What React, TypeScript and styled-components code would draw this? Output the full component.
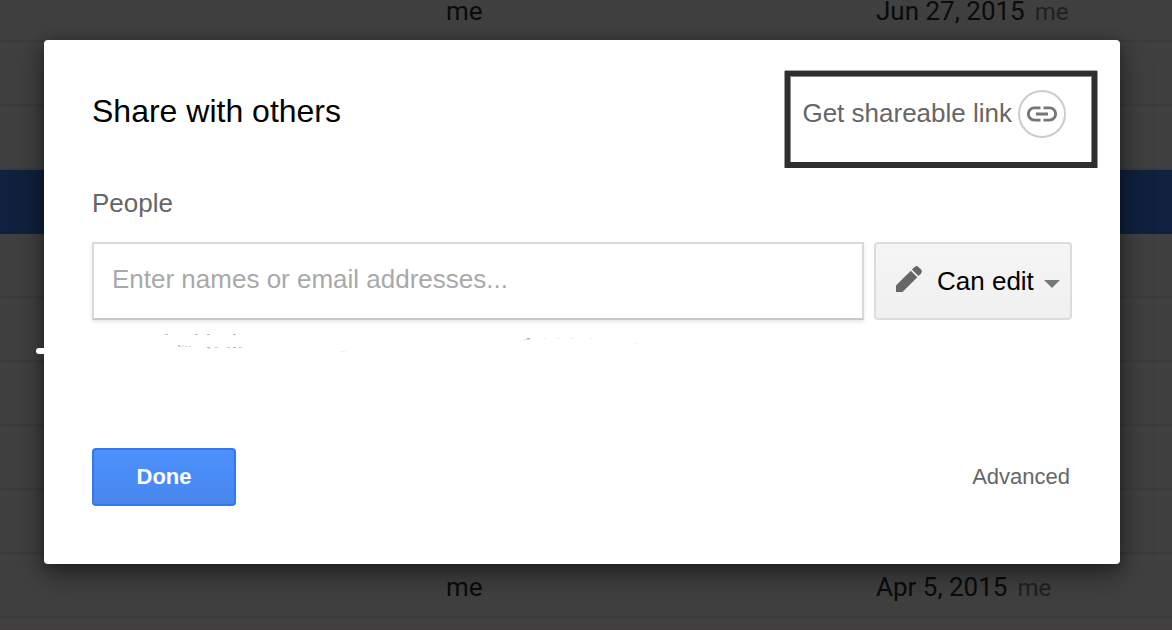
import React from 'react';
import styled, { createGlobalStyle } from 'styled-components';

const GlobalStyle = createGlobalStyle`
  * { box-sizing: border-box; }
  body { margin: 0; background: #404040; overflow: hidden; }
`;

const Screen = styled.div`
  position: relative;
  width: 1172px;
  height: 630px;
  overflow: hidden;
  background: #404040;
  font-family: 'Liberation Sans', Arial, sans-serif;
`;

const FileRow = styled.div<{ $height?: number; $selected?: boolean }>`
  display: flex;
  align-items: flex-end;
  height: ${p => p.$height ?? 64}px;
  padding: 0 0 17px 446px;
  border-bottom: 2px solid ${p => (p.$selected ? '#10203e' : '#3b3b3b')};
  background: ${p => (p.$selected ? '#10203e' : '#404040')};
  font: 26px/24px Roboto, sans-serif;
  color: #0b0b0b;
`;

const Owner = styled.span`
  width: 430px;
`;

const Modified = styled.span``;

const ModifiedBy = styled.span`
  margin-left: 10px;
  font-size: 24px;
  line-height: 16px;
  color: #202020;
`;

const LastRow = styled.div`
  height: 12px;
  border-bottom: 1px solid #43393b;
`;

const Dialog = styled.section`
  position: absolute;
  left: 44px;
  top: 40px;
  display: flex;
  flex-direction: column;
  width: 1076px;
  height: 524px;
  padding: 48px 48px 58px;
  border-radius: 4px;
  background: #fff;
  box-shadow: 0 10px 32px rgba(0, 0, 0, 0.4), 0 4px 14px rgba(0, 0, 0, 0.3);
`;

const Header = styled.header`
  display: flex;
  justify-content: space-between;
  height: 96px;
`;

const Title = styled.h1`
  margin: 4px 0 0;
  font-size: 32px;
  line-height: 38px;
  font-weight: 400;
  color: #000;
`;

const LinkButton = styled.div`
  display: flex;
  height: 48px;
  margin: 2px 6px 0 0;
  font-size: 26px;
  line-height: 46px;
  color: #666;
`;

const LinkCircle = styled.span`
  display: flex;
  align-items: center;
  justify-content: center;
  width: 48px;
  height: 48px;
  margin-left: 6px;
  border: 2px solid #ccc;
  border-radius: 50%;
`;

const Highlight = styled.div`
  position: absolute;
  left: 741px;
  top: 31px;
  width: 312px;
  height: 97px;
  border: 5px solid #2f2f2f;
  border-bottom-width: 6px;
  box-shadow: 0 -1px #aaa, -1px 0 #999, 1px 0 #999, inset 1px 1px #888, inset -1px 0 #888;
`;

const Label = styled.label`
  height: 58px;
  padding-top: 4px;
  font-size: 26px;
  line-height: 30px;
  color: #666;
`;

const Fields = styled.div`
  display: flex;
  gap: 10px;
  height: 78px;
`;

const NameField = styled.div`
  width: 772px;
  padding-left: 18px;
  border: 2px solid #d9d9d9;
  border-bottom-color: #c8c8c8;
  box-shadow: 0 2px 4px rgba(0, 0, 0, 0.1);
  font-size: 26px;
  line-height: 71px;
  color: #a9a9a9;
`;

const RoleButton = styled.div`
  display: flex;
  align-items: center;
  width: 198px;
  padding-left: 19px;
  border: 2px solid #dcdcdc;
  border-radius: 4px;
  background: linear-gradient(#f5f5f5, #f0f0f0);
  font-size: 26px;
  color: #000;
`;

const RoleText = styled.span`
  margin: 0 10px 0 14px;
`;

const Caret = styled.span`
  margin-top: 5px;
  border: 8px solid transparent;
  border-top-color: #777;
  border-bottom: 0;
`;

const Footer = styled.footer`
  display: flex;
  justify-content: space-between;
  margin-top: auto;
  font-size: 22px;
  line-height: 54px;
  color: #666;
`;

const DoneButton = styled.div`
  width: 144px;
  height: 58px;
  border: 2px solid #3079ed;
  border-radius: 4px;
  background: linear-gradient(#4d90fe, #4787ed);
  color: #fff;
  font-weight: 700;
  text-align: center;
`;

const Advanced = styled.span`
  padding: 2px 2px 0 0;
`;

const Tab = styled.span`
  position: absolute;
  left: -8px;
  top: 308px;
  width: 10px;
  height: 6px;
  border-radius: 3px 0 0 3px;
  background: #fff;
`;

const Specks = styled.svg`
  position: absolute;
  left: 112px;
  top: 292px;
`;

// x, y, width, grey level
const SPECKS: [number, number, number, string][] = [
  [9, 2, 3, '#c4c4c4'], [39, 2, 3, '#bbb'], [51, 2, 3, '#c0c0c0'], [73, 2, 1, '#e5e5e5'], [77, 2, 3, '#bbb'],
  [22, 13, 2, '#bbb'], [22, 14, 4, '#ddd'], [26, 13, 2, '#ddd'], [29, 14, 3, '#ddd'], [33, 14, 2, '#ddd'],
  [51, 15, 3, '#bbb'], [52, 16, 2, '#ddd'], [59, 15, 3, '#ccc'], [71, 15, 3, '#ccc'], [77, 15, 3, '#bbb'], [83, 15, 3, '#ccc'],
  [184, 19, 6, '#f2f2f2'], [371, 6, 3, '#aaa'], [368, 7, 6, '#ddd'], [387, 6, 3, '#eee'], [401, 6, 3, '#eee'],
  [414, 6, 3, '#eee'], [434, 6, 2, '#eee'], [478, 11, 2, '#eee'],
];

const LinkIcon = () => (
  <svg width="36" height="36" viewBox="0 0 24 24" fill="#757575">
    <path d="M3.9 12c0-1.71 1.39-3.1 3.1-3.1h4V7H7c-2.76 0-5 2.24-5 5s2.24 5 5 5h4v-1.9H7c-1.71 0-3.1-1.39-3.1-3.1zM8 13h8v-2H8v2zm9-6h-4v1.9h4c1.71 0 3.1 1.39 3.1 3.1s-1.39 3.1-3.1 3.1h-4V17h4c2.76 0 5-2.24 5-5s-2.24-5-5-5z" />
  </svg>
);

const Pencil = styled.svg`
  flex: none;
  margin-top: -4px;
`;

const PencilIcon = () => (
  <Pencil width="28" height="28" viewBox="0 0 28 28" fill="#666">
    <path d="M1 27V20.5L15.8 5.7L22.3 12.2L7.5 27Z" />
    <path d="M16.9 4.6L19.6 1.9Q21.5 .2 23.4 1.9L26.1 4.6Q27.8 6.5 26.1 8.4L23.4 11.1Z" />
  </Pencil>
);

const ROWS_BETWEEN = [false, false, true, false, false, false, false, false];

export default function App() {
  return (
    <Screen>
      <GlobalStyle />
      <FileRow $height={42}>
        <Owner>me</Owner>
        <Modified>Jun 27, 2015<ModifiedBy>me</ModifiedBy></Modified>
      </FileRow>
      {ROWS_BETWEEN.map((selected, i) => (
        <FileRow key={i} $selected={selected} />
      ))}
      <FileRow>
        <Owner>me</Owner>
        <Modified>Apr 5, 2015<ModifiedBy>me</ModifiedBy></Modified>
      </FileRow>
      <LastRow />
      <Dialog>
        <Header>
          <Title>Share with others</Title>
          <LinkButton>
            Get shareable link
            <LinkCircle><LinkIcon /></LinkCircle>
          </LinkButton>
        </Header>
        <Label>People</Label>
        <Fields>
          <NameField>Enter names or email addresses...</NameField>
          <RoleButton>
            <PencilIcon />
            <RoleText>Can edit</RoleText>
            <Caret />
          </RoleButton>
        </Fields>
        <Footer>
          <DoneButton>Done</DoneButton>
          <Advanced>Advanced</Advanced>
        </Footer>
        <Highlight />
        <Tab />
        <Specks width="500" height="24" shapeRendering="crispEdges">
          {SPECKS.map(([x, y, w, c], i) => (
            <rect key={i} x={x} y={y} width={w} height="1" fill={c} />
          ))}
        </Specks>
      </Dialog>
    </Screen>
  );
}
